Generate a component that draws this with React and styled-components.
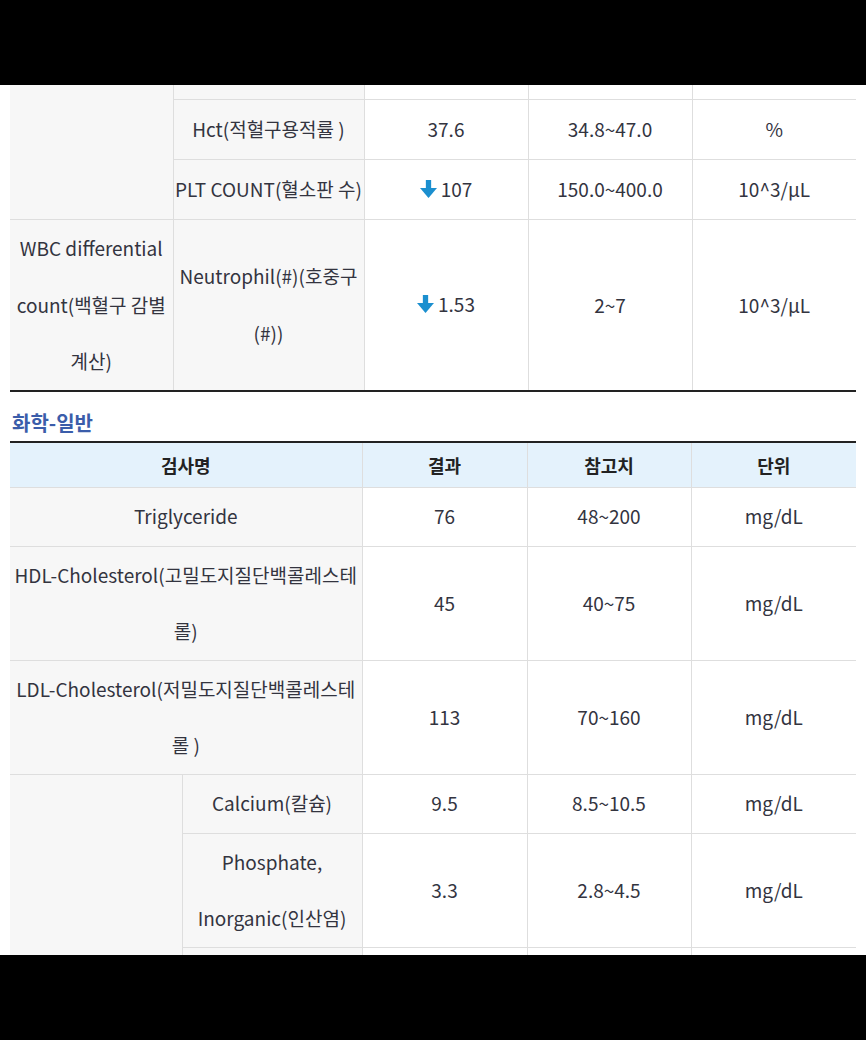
import React from 'react';
import styled, { createGlobalStyle } from 'styled-components';

const GlobalStyle = createGlobalStyle`
  html, body {
    margin: 0;
    padding: 0;
    background: #000;
  }
  body {
    font-family: "Noto Sans CJK KR", "Noto Sans", sans-serif;
  }
`;

const Screen = styled.div`
  width: 866px;
  height: 1040px;
  display: flex;
  flex-direction: column;
  background: #000;
`;

const Letterbox = styled.div`
  flex: 0 0 ${props => props.h}px;
  background: #000;
`;

const Viewport = styled.div`
  flex: 0 0 870px;
  background: #fff;
  overflow: hidden;
`;

const Content = styled.div`
  padding: 0 10px;
  margin-top: ${props => props.offset || 0}px;
`;

const Table = styled.table`
  width: 846px;
  table-layout: fixed;
  border-collapse: collapse;
  border-bottom: ${props => (props.closed ? '2px solid #222' : 'none')};
  border-top: ${props => (props.opened ? '2px solid #222' : 'none')};
  font-size: 19px;
  color: #33343f;

  & td {
    height: ${props => props.rowHeight}px;
  }
`;

const Th = styled.th`
  height: 44px;
  padding: 0 6px;
  background: #e4f2fc;
  border: 1px solid #dedede;
  border-top: none;
  font-size: 18px;
  font-weight: 700;
  color: #222;
  &:first-child { border-left: none; }
  &:last-child { border-right: none; }
`;

const Td = styled.td`
  padding: 0 1px;
  line-height: 56.5px;
  text-align: center;
  vertical-align: middle;
  background: ${props => (props.label ? '#f7f7f7' : '#fff')};
  border: 1px solid #dedede;
  word-break: normal;
  overflow-wrap: break-word;
  &:first-child { border-left: none; }
  &:last-child { border-right: none; }
`;

const Value = styled.span`
  display: inline-flex;
  align-items: center;
  gap: 4px;
`;

const Heading = styled.h3`
  margin: 16px 0 3px;
  padding-left: 2px;
  font-size: 20px;
  line-height: 30px;
  font-weight: 700;
  color: #3b5daa;
`;

const DownArrow = () => (
  <svg width="17" height="18" viewBox="0 0 16 17">
    <rect x="5.5" y="0" width="5" height="8" fill="#1b8fcf" />
    <polygon points="0,7.5 16,7.5 8,17" fill="#1b8fcf" />
  </svg>
);

const Result = ({ low, children }) => (
  <Value>
    {low && <DownArrow />}
    {children}
  </Value>
);

export default function App() {
  return (
    <Screen>
      <GlobalStyle />
      <Letterbox h={85} />
      <Viewport>
        <Content offset={-46}>
          <Table closed rowHeight={59}>
            <colgroup>
              <col style={{ width: 163 }} />
              <col style={{ width: 191 }} />
              <col style={{ width: 164 }} />
              <col style={{ width: 164 }} />
              <col style={{ width: 164 }} />
            </colgroup>
            <tbody>
              <tr>
                <Td label rowSpan={3} />
                <Td label />
                <Td />
                <Td />
                <Td />
              </tr>
              <tr>
                <Td label>Hct(적혈구용적률 )</Td>
                <Td>37.6</Td>
                <Td>34.8~47.0</Td>
                <Td>%</Td>
              </tr>
              <tr>
                <Td label>PLT COUNT(혈소판 수)</Td>
                <Td><Result low>107</Result></Td>
                <Td>150.0~400.0</Td>
                <Td>10^3/μL</Td>
              </tr>
              <tr>
                <Td label>WBC differential count(백혈구 감별 계산)</Td>
                <Td label>Neutrophil(#)(호중구(#))</Td>
                <Td><Result low>1.53</Result></Td>
                <Td>2~7</Td>
                <Td>10^3/μL</Td>
              </tr>
            </tbody>
          </Table>

          <Heading>화학-일반</Heading>

          <Table opened rowHeight={58}>
            <colgroup>
              <col style={{ width: 172 }} />
              <col style={{ width: 180 }} />
              <col style={{ width: 165 }} />
              <col style={{ width: 164 }} />
              <col style={{ width: 165 }} />
            </colgroup>
            <thead>
              <tr>
                <Th colSpan={2}>검사명</Th>
                <Th>결과</Th>
                <Th>참고치</Th>
                <Th>단위</Th>
              </tr>
            </thead>
            <tbody>
              <tr>
                <Td label colSpan={2}>Triglyceride</Td>
                <Td>76</Td>
                <Td>48~200</Td>
                <Td>mg/dL</Td>
              </tr>
              <tr>
                <Td label colSpan={2}>HDL-Cholesterol(고밀도지질단백콜레스테롤)</Td>
                <Td>45</Td>
                <Td>40~75</Td>
                <Td>mg/dL</Td>
              </tr>
              <tr>
                <Td label colSpan={2}>LDL-Cholesterol(저밀도지질단백콜레스테롤 )</Td>
                <Td>113</Td>
                <Td>70~160</Td>
                <Td>mg/dL</Td>
              </tr>
              <tr>
                <Td label rowSpan={3} />
                <Td label>Calcium(칼슘)</Td>
                <Td>9.5</Td>
                <Td>8.5~10.5</Td>
                <Td>mg/dL</Td>
              </tr>
              <tr>
                <Td label>Phosphate, Inorganic(인산염)</Td>
                <Td>3.3</Td>
                <Td>2.8~4.5</Td>
                <Td>mg/dL</Td>
              </tr>
              <tr>
                <Td label />
                <Td />
                <Td />
                <Td />
              </tr>
            </tbody>
          </Table>
        </Content>
      </Viewport>
      <Letterbox h={85} />
    </Screen>
  );
}
